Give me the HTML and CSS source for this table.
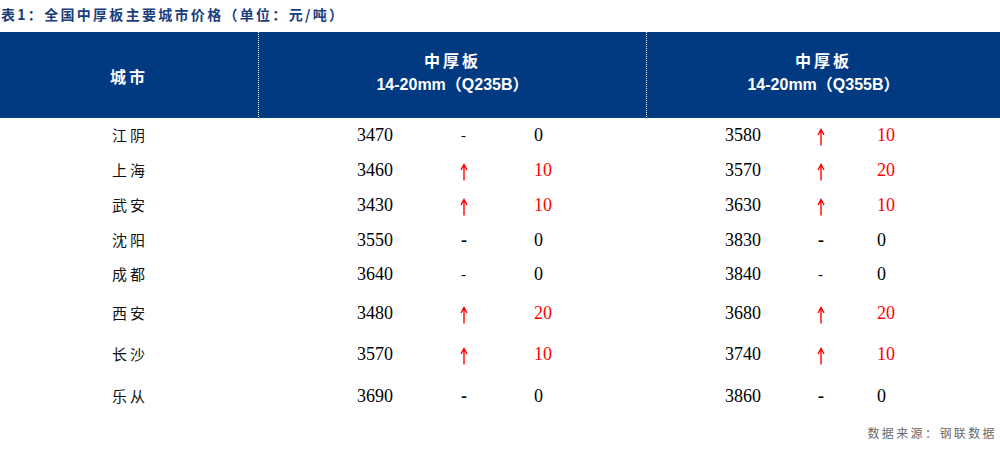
FILE: index.html
```html
<!DOCTYPE html>
<html lang="zh-CN">
<head>
<meta charset="utf-8">
<title>全国中厚板主要城市价格</title>
<link rel="stylesheet" href="styles.css">
</head>
<body>
<div class="title">表1：全国中厚板主要城市价格（单位：元/吨）</div>
<div class="head">
  <div class="hcell city-h">城市</div>
  <div class="hcell"><span class="h1">中厚板</span><span class="h2">14-20mm（Q235B）</span></div>
  <div class="hcell"><span class="h1">中厚板</span><span class="h2">14-20mm（Q355B）</span></div>
</div>
<div class="body">
  <div class="row r34"><span class="city">江阴</span><span class="num">3470</span><span class="dash thin">-</span><span class="num">0</span><span class="num">3580</span><span class="up"><svg viewBox="0 0 8 18" width="8" height="18"><path d="M4 1.5 V17.5 M1 7 L4 1.5 L7 7" stroke="#ff0000" stroke-width="1.4" fill="none"/></svg></span><span class="num red">10</span></div>
  <div class="row r35"><span class="city">上海</span><span class="num">3460</span><span class="up"><svg viewBox="0 0 8 18" width="8" height="18"><path d="M4 1.5 V17.5 M1 7 L4 1.5 L7 7" stroke="#ff0000" stroke-width="1.4" fill="none"/></svg></span><span class="num red">10</span><span class="num">3570</span><span class="up"><svg viewBox="0 0 8 18" width="8" height="18"><path d="M4 1.5 V17.5 M1 7 L4 1.5 L7 7" stroke="#ff0000" stroke-width="1.4" fill="none"/></svg></span><span class="num red">20</span></div>
  <div class="row r35"><span class="city">武安</span><span class="num">3430</span><span class="up"><svg viewBox="0 0 8 18" width="8" height="18"><path d="M4 1.5 V17.5 M1 7 L4 1.5 L7 7" stroke="#ff0000" stroke-width="1.4" fill="none"/></svg></span><span class="num red">10</span><span class="num">3630</span><span class="up"><svg viewBox="0 0 8 18" width="8" height="18"><path d="M4 1.5 V17.5 M1 7 L4 1.5 L7 7" stroke="#ff0000" stroke-width="1.4" fill="none"/></svg></span><span class="num red">10</span></div>
  <div class="row r35"><span class="city">沈阳</span><span class="num">3550</span><span class="dash bold">-</span><span class="num">0</span><span class="num">3830</span><span class="dash bold">-</span><span class="num">0</span></div>
  <div class="row r34"><span class="city">成都</span><span class="num">3640</span><span class="dash thin">-</span><span class="num">0</span><span class="num">3840</span><span class="dash thin">-</span><span class="num">0</span></div>
  <div class="row r44"><span class="city">西安</span><span class="num">3480</span><span class="up"><svg viewBox="0 0 8 18" width="8" height="18"><path d="M4 1.5 V17.5 M1 7 L4 1.5 L7 7" stroke="#ff0000" stroke-width="1.4" fill="none"/></svg></span><span class="num red">20</span><span class="num">3680</span><span class="up"><svg viewBox="0 0 8 18" width="8" height="18"><path d="M4 1.5 V17.5 M1 7 L4 1.5 L7 7" stroke="#ff0000" stroke-width="1.4" fill="none"/></svg></span><span class="num red">20</span></div>
  <div class="row r38"><span class="city">长沙</span><span class="num">3570</span><span class="up"><svg viewBox="0 0 8 18" width="8" height="18"><path d="M4 1.5 V17.5 M1 7 L4 1.5 L7 7" stroke="#ff0000" stroke-width="1.4" fill="none"/></svg></span><span class="num red">10</span><span class="num">3740</span><span class="up"><svg viewBox="0 0 8 18" width="8" height="18"><path d="M4 1.5 V17.5 M1 7 L4 1.5 L7 7" stroke="#ff0000" stroke-width="1.4" fill="none"/></svg></span><span class="num red">10</span></div>
  <div class="row r46"><span class="city">乐从</span><span class="num">3690</span><span class="dash bold">-</span><span class="num">0</span><span class="num">3860</span><span class="dash bold">-</span><span class="num">0</span></div>
</div>
<div class="source">数据来源：钢联数据</div>
</body>
</html>
```
FILE: styles.css
```css
html, body {
  margin: 0;
  padding: 0;
  background: #ffffff;
  width: 1000px;
  height: 450px;
  overflow: hidden;
}

.title {
  height: 32px;
  line-height: 28px;
  font-family: "Noto Sans CJK SC", "Liberation Sans", sans-serif;
  font-weight: 700;
  font-size: 14px;
  letter-spacing: 2.3px;
  color: #1b3d7c;
  padding-left: 1px;
}

.head {
  display: grid;
  grid-template-columns: 258px 388px 1fr;
  height: 85px;
  background: #023a82;
  border-bottom: 1px dotted #023a82;
  border-left: 1px dotted #ffffff;
  box-sizing: content-box;
  margin-left: -1px;
}

.hcell {
  display: flex;
  flex-direction: column;
  align-items: center;
  justify-content: center;
  color: #ffffff;
  font-weight: 700;
  border-left: 1px dotted #ffffff;
}

.hcell.city-h {
  border-left: none;
  font-family: "Noto Sans CJK SC", sans-serif;
  font-size: 16px;
  letter-spacing: 3px;
  padding-top: 2px;
}

.h1 {
  font-family: "Noto Sans CJK SC", sans-serif;
  font-size: 16px;
  letter-spacing: 3px;
  line-height: 22px;
  margin-top: -4px;
}

.h2 {
  font-family: "Liberation Sans", "Noto Sans CJK SC", sans-serif;
  font-size: 16px;
  line-height: 22px;
  margin-top: 3px;
}

.row {
  display: grid;
  grid-template-columns: 357px 103px 74px 191px 92px 60px 1fr;
  align-items: center;
  font-family: "Liberation Serif", "Noto Sans CJK SC", serif;
  font-size: 18px;
  color: #000000;
}

.row > .city { padding-left: 112px; }

.r34 { height: 34px; }
.r35 { height: 35px; }
.r38 { height: 38px; }
.r44 { height: 44px; }
.r46 { height: 46px; }

.city {
  font-family: "Noto Sans CJK SC", sans-serif;
  font-size: 15px;
  letter-spacing: 3px;
  font-weight: 400;
  color: #111111;
  line-height: 20px;
}

.num { line-height: 20px; }
.red { color: #ff0000; }

.up {
  display: flex;
  align-items: flex-start;
  height: 20px;
}

.up svg {
  display: block;
  margin-top: 3px;
}

.dash {
  line-height: 20px;
  padding-left: 1px;
}

.dash.bold { font-weight: 700; }
.dash.thin { font-size: 15px; }

.source {
  text-align: right;
  padding-right: 3px;
  padding-top: 5px;
  font-family: "Noto Sans CJK SC", sans-serif;
  font-size: 12px;
  letter-spacing: 2.4px;
  color: #6a6a6a;
}
```
